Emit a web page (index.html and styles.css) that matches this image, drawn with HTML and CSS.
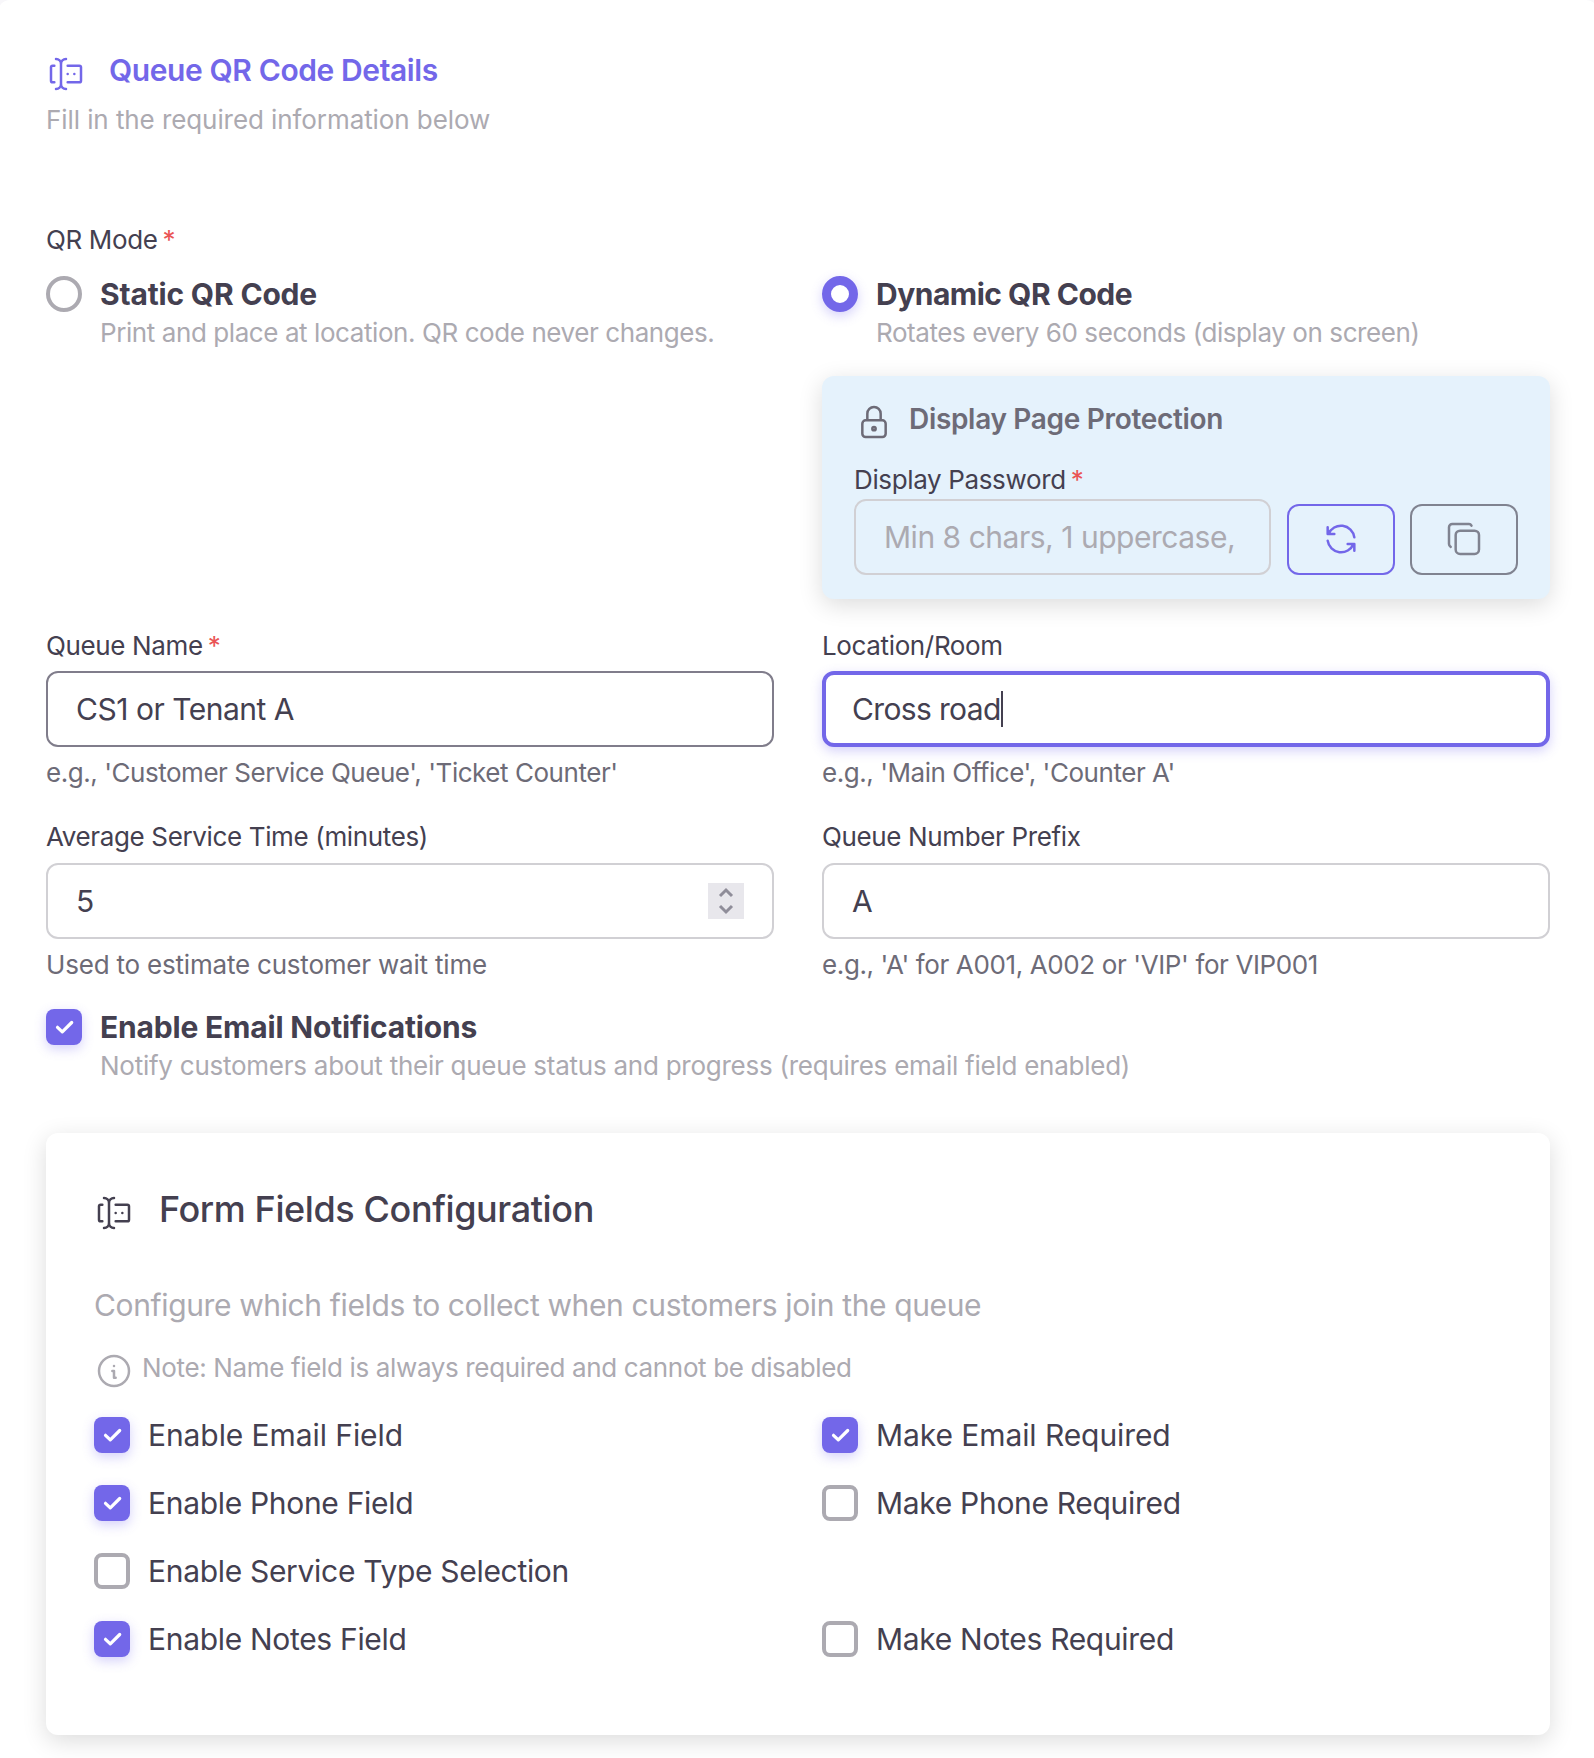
FILE: index.html
```html
<!DOCTYPE html>
<html lang="en">

<head>
    <meta charset="UTF-8">
    <meta name="viewport" content="width=device-width, initial-scale=1.0">
    <title>Queue QR Code Details</title>
    <link rel="stylesheet" href="styles.css">
</head>

<body>

    <!-- Icon shapes -->
    <svg class="sprite">
        <symbol id="i-forms" viewBox="0 0 24 24">
            <path d="M12 3a3 3 0 0 0 -3 3v12a3 3 0 0 0 3 3M6 3a3 3 0 0 1 3 3v12a3 3 0 0 1 -3 3M13 7h7a1 1 0 0 1 1 1v8a1 1 0 0 1 -1 1h-7M5 7h-1a1 1 0 0 0 -1 1v8a1 1 0 0 0 1 1h1M17 12h.01M13 12h.01" />
        </symbol>
        <symbol id="i-lock" viewBox="0 0 24 24">
            <path d="M5 13a2 2 0 0 1 2 -2h10a2 2 0 0 1 2 2v6a2 2 0 0 1 -2 2h-10a2 2 0 0 1 -2 -2zM11 16a1 1 0 1 0 2 0a1 1 0 0 0 -2 0M8 11v-4a4 4 0 1 1 8 0v4" />
        </symbol>
        <symbol id="i-refresh" viewBox="0 0 24 24">
            <path d="M20 11a8.1 8.1 0 0 0 -15.5 -2m-.5 -4v4h4M4 13a8.1 8.1 0 0 0 15.5 2m.5 4v-4h-4" />
        </symbol>
        <symbol id="i-copy" viewBox="0 0 24 24">
            <path d="M7 9.667a2.667 2.667 0 0 1 2.667 -2.667h8.666a2.667 2.667 0 0 1 2.667 2.667v8.666a2.667 2.667 0 0 1 -2.667 2.667h-8.666a2.667 2.667 0 0 1 -2.667 -2.667zM4.012 16.737a2.005 2.005 0 0 1 -1.012 -1.737v-10c0 -1.1 .9 -2 2 -2h10c.75 0 1.158 .385 1.5 1" />
        </symbol>
        <symbol id="i-info" viewBox="0 0 24 24">
            <path d="M3 12a9 9 0 1 0 18 0a9 9 0 0 0 -18 0M12 9h.01M11 12h1v4h1" />
        </symbol>
        <symbol id="i-check" viewBox="0 0 36 36">
            <path d="M11.5 18.3l4.8 4.6l9.4 -9.4" />
        </symbol>
    </svg>

    <main class="panel">

        <!-- Header -->
        <header class="panel-header">
            <div class="panel-title">
                <svg class="icon"><use href="#i-forms" /></svg>
                <h1>Queue QR Code Details</h1>
            </div>
            <p class="small muted subtitle">Fill in the required information below</p>
        </header>

        <!-- QR mode -->
        <div class="label qr-label">QR Mode <span class="required">*</span></div>
        <div class="row">
            <div class="choice">
                <span class="radio"></span>
                <div>
                    <strong>Static QR Code</strong>
                    <p class="muted desc">Print and place at location. QR code never changes.</p>
                </div>
            </div>
            <div>
                <div class="choice">
                    <span class="radio checked"></span>
                    <div>
                        <strong class="dynamic-name">Dynamic QR Code</strong>
                        <p class="muted desc">Rotates every 60 seconds (display on screen)</p>
                    </div>
                </div>
                <section class="protection">
                    <div class="protection-title">
                        <svg class="icon"><use href="#i-lock" /></svg>
                        <h2>Display Page Protection</h2>
                    </div>
                    <div class="label">Display Password <span class="required">*</span></div>
                    <div class="password-row">
                        <input class="control" type="text" placeholder="Min 8 chars, 1 uppercase,">
                        <button class="btn btn-primary"><svg class="icon"><use href="#i-refresh" /></svg></button>
                        <button class="btn"><svg class="icon"><use href="#i-copy" /></svg></button>
                    </div>
                </section>
            </div>
        </div>

        <!-- Queue fields -->
        <div class="row fields">
            <div class="field">
                <div class="label">Queue Name <span class="required">*</span></div>
                <input class="control hovered" type="text" value="CS1 or Tenant A">
                <p class="hint">e.g., 'Customer Service Queue', 'Ticket Counter'</p>
            </div>
            <div class="field">
                <div class="label">Location/Room</div>
                <div class="control focused">Cross road<span class="caret"></span></div>
                <p class="hint">e.g., 'Main Office', 'Counter A'</p>
            </div>
            <div class="field">
                <div class="label">Average Service Time (minutes)</div>
                <div class="control number">
                    <span>5</span>
                    <svg class="spinner" viewBox="0 0 36 36"><path d="M12 13l6 -6l6 6M12 23l6 6l6 -6" /></svg>
                </div>
                <p class="hint wait-hint">Used to estimate customer wait time</p>
            </div>
            <div class="field">
                <div class="label">Queue Number Prefix</div>
                <input class="control" type="text" value="A">
                <p class="hint prefix-hint">e.g., 'A' for A001, A002 or 'VIP' for VIP001</p>
            </div>
        </div>

        <div class="choice notify">
            <span class="checkbox checked"><svg><use href="#i-check" /></svg></span>
            <div>
                <strong>Enable Email Notifications</strong>
                <p class="muted desc">Notify customers about their queue status and progress (requires email field enabled)</p>
            </div>
        </div>

        <!-- Form fields configuration -->
        <section class="config">
            <div class="config-title">
                <svg class="icon"><use href="#i-forms" /></svg>
                <h2>Form Fields Configuration</h2>
            </div>
            <p class="config-text muted">Configure which fields to collect when customers join the queue</p>
            <div class="note muted">
                <svg class="icon"><use href="#i-info" /></svg>
                <span class="small">Note: Name field is always required and cannot be disabled</span>
            </div>
            <div class="row checks">
                <label class="check email"><span class="checkbox checked"><svg><use href="#i-check" /></svg></span>Enable Email Field</label>
                <label class="check email"><span class="checkbox checked"><svg><use href="#i-check" /></svg></span>Make Email Required</label>
                <label class="check"><span class="checkbox checked"><svg><use href="#i-check" /></svg></span>Enable Phone Field</label>
                <label class="check"><span class="checkbox"></span>Make Phone Required</label>
                <label class="check full"><span class="checkbox"></span>Enable Service Type Selection</label>
                <label class="check"><span class="checkbox checked"><svg><use href="#i-check" /></svg></span>Enable Notes Field</label>
                <label class="check"><span class="checkbox"></span>Make Notes Required</label>
            </div>
        </section>

    </main>

</body>

</html>
```

FILE: styles.css
```css
* {
    box-sizing: border-box;
    margin: 0;
    padding: 0;
}

body {
    height: 1758px;
    overflow: hidden;
    background-color: #f8f7fa;
    color: #444050;
    font-family: Inter, "Liberation Sans", sans-serif;
    font-size: 30px;
}

.sprite {
    display: none;
}

/* Main panel, runs slightly past the window sides */
.panel {
    margin: 0 -4px 0 -2px;
    padding: 50px 48px 0;
    min-height: 1800px;
    background-color: #fff;
    border-radius: 12px;
}

.icon {
    display: block;
    flex: none;
    width: 40px;
    height: 40px;
    fill: none;
    stroke: currentColor;
    stroke-width: 1.5;
    stroke-linecap: round;
    stroke-linejoin: round;
}

.muted {
    color: #acaab1;
}

.small {
    font-size: 26px;
    line-height: 42px;
}

/* Header */
.panel-title {
    display: flex;
    gap: 23px;
    color: #7367e9;
}

.panel-title .icon {
    margin-top: 4px;
}

.panel-title h1 {
    font-size: 30px;
    font-weight: 600;
    line-height: 40px;
    letter-spacing: -0.4px;
}

.subtitle {
    margin-top: 5px;
    letter-spacing: -0.08px;
}

/* Labels */
.label {
    font-size: 26px;
    line-height: 42px;
    letter-spacing: -0.36px;
}

.required {
    margin-left: -2px;
    color: #ea5455;
}

.qr-label {
    margin: 78px 0 12px;
}

.row {
    display: grid;
    grid-template-columns: 1fr 1fr;
    column-gap: 48px;
}

/* Radio and checkbox with description */
.choice {
    display: flex;
    align-items: flex-start;
    gap: 18px;
}

.choice strong {
    display: block;
    font-weight: 700;
    line-height: 42px;
    letter-spacing: -0.18px;
}

.choice .dynamic-name {
    letter-spacing: -0.5px;
}

.desc {
    font-size: 26px;
    line-height: 36px;
    letter-spacing: -0.42px;
    white-space: nowrap;
}

.choice .radio,
.choice .checkbox {
    margin-top: 3px;
}

.radio,
.checkbox {
    flex: none;
    width: 36px;
    height: 36px;
    border: 4px solid #acaab1;
    border-radius: 8px;
}

.radio {
    border-radius: 50%;
}

.radio.checked {
    border: 9.5px solid #7367e9;
    box-shadow: 0 4px 12px rgba(115, 103, 240, 0.3);
}

.checkbox.checked {
    border: 0;
    background-color: #7367e9;
    box-shadow: 0 4px 12px rgba(115, 103, 240, 0.3);
}

.checkbox svg {
    display: block;
    width: 36px;
    height: 36px;
    fill: none;
    stroke: #fff;
    stroke-width: 3.2;
    stroke-linecap: round;
    stroke-linejoin: round;
}

/* Password box */
.protection {
    margin-top: 25px;
    padding: 23px 32px 24px;
    background-color: #e5f2fc;
    border-radius: 12px;
    box-shadow: 0 6px 24px rgba(0, 0, 0, 0.14);
}

.protection-title {
    display: flex;
    gap: 15px;
    margin-bottom: 17px;
    color: #6d6b77;
}

.protection-title .icon {
    margin-top: 3px;
}

.protection-title h2 {
    font-size: 28px;
    font-weight: 600;
    line-height: 41px;
    letter-spacing: -0.32px;
}

.protection .label {
    margin-bottom: -2px;
}

.password-row {
    display: flex;
    align-items: flex-end;
}

.password-row .control {
    flex: 1;
    min-width: 0;
    background-color: transparent;
}

.btn {
    display: flex;
    align-items: center;
    justify-content: center;
    width: 108px;
    height: 71px;
    margin-left: 15px;
    padding-bottom: 2px;
    background-color: transparent;
    border: 2px solid #808390;
    border-radius: 12px;
    color: #808390;
}

.btn-primary {
    margin-left: 16px;
    border-color: #7367e9;
    color: #7367e9;
}

/* Text fields */
.fields {
    margin-top: 26px;
    row-gap: 22px;
}

.control {
    display: block;
    width: 100%;
    height: 76px;
    padding: 0 28px;
    border: 2px solid #d1d0d4;
    border-radius: 12px;
    background-color: #fff;
    color: #444050;
    font-family: inherit;
    font-size: 30px;
    line-height: 72px;
    letter-spacing: -0.48px;
}

.control::placeholder {
    color: #acaab1;
    opacity: 1;
}

.field .control {
    margin: 4px 0 5px;
}

.field:nth-child(n+3) .label {
    padding-bottom: 1px;
}

.control.hovered {
    border-color: #807d8b;
}

.control.focused {
    display: flex;
    align-items: center;
    padding: 0 26px;
    border: 4px solid #7367e9;
    box-shadow: 0 4px 12px rgba(115, 103, 240, 0.3);
    letter-spacing: -0.65px;
}

.caret {
    width: 2px;
    height: 36px;
    background-color: #444050;
}

.control.number {
    display: flex;
    align-items: center;
    justify-content: space-between;
}

.spinner {
    width: 36px;
    height: 36px;
    background-color: #e8e7ec;
    fill: none;
    stroke: #8f8d99;
    stroke-width: 3;
}

.hint {
    color: #6d6b77;
    font-size: 26px;
    line-height: 42px;
    letter-spacing: -0.46px;
}

.wait-hint {
    letter-spacing: -0.2px;
}

.prefix-hint {
    letter-spacing: -0.38px;
}

.notify {
    margin-top: 20px;
}

.notify .desc {
    letter-spacing: -0.25px;
}

/* Configuration card */
.config {
    margin-top: 49px;
    padding: 50px 48px 78px;
    background-color: #fff;
    border-radius: 12px;
    box-shadow: 0 6px 24px rgba(0, 0, 0, 0.14);
}

.config-title {
    display: flex;
    gap: 25px;
}

.config-title .icon {
    margin-top: 10px;
}

.config-title h2 {
    font-size: 36px;
    font-weight: 500;
    line-height: 52px;
    letter-spacing: -0.4px;
}

.config-text {
    margin-top: 48px;
    line-height: 44px;
    letter-spacing: -0.37px;
}

.note {
    display: flex;
    gap: 8px;
    margin: 20px 0 26px;
    letter-spacing: -0.35px;
}

.note .icon {
    margin-top: 4px;
}

.checks {
    row-gap: 32px;
}

.check {
    display: flex;
    gap: 18px;
    line-height: 36px;
    letter-spacing: -0.31px;
}

.check.email {
    letter-spacing: -0.08px;
}

.check.full {
    grid-column: 1 / -1;
}
```
